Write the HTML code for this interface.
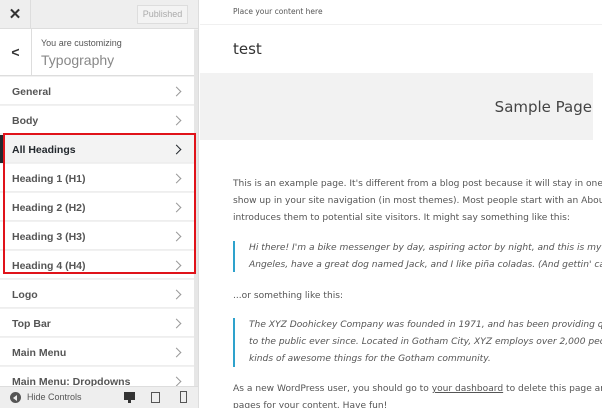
<!DOCTYPE html>
<html><head><style>
*{margin:0;padding:0;box-sizing:border-box}
body{width:602px;height:408px;overflow:hidden;font-family:"Liberation Sans",sans-serif;background:#fff;position:relative}
#sb{position:absolute;left:0;top:0;width:199px;height:408px;background:#f1f1f1;border-right:1px solid #ddd}
.top{position:absolute;left:0;top:0;width:198px;height:29px;background:#eee;border-bottom:1px solid #ddd}
.x{position:absolute;left:0;top:0;width:31px;height:29px;border-right:1px solid #ddd;text-align:center;line-height:29px;font-size:15px;color:#333;font-weight:bold}
.pub{position:absolute;left:137px;top:5px;width:51px;height:19px;border:1px solid #ddd;background:#f3f3f3;color:#aaa;font-size:9px;text-align:center;line-height:17px}
.cust{position:absolute;left:0;top:29px;width:194px;height:47px;background:#fff;border-bottom:1px solid #ddd}
.back{position:absolute;left:0;top:0;width:32px;height:47px;border-right:1px solid #ddd;text-align:center;line-height:47px;font-size:14px;font-weight:bold;color:#333}
.cust .s{position:absolute;left:41px;top:9px;font-size:9px;color:#555}
.cust .t{position:absolute;left:41px;top:23px;font-size:14px;color:#888}
.it{position:absolute;left:0;width:194px;height:28px;background:#fff;border-bottom:1px solid #eee;font-size:10.5px;color:#555;padding-left:12px;line-height:30px}
.it b{font-weight:bold}
.it:after{content:"";position:absolute;right:14px;top:11px;width:6px;height:6px;border-right:1.5px solid #999;border-top:1.5px solid #999;transform:rotate(45deg)}
.act{background:#f3f3f3;color:#23282d;font-weight:bold}
.act:after{border-color:#23282d}
.red{position:absolute;left:3px;top:133px;width:193px;height:141px;border:2px solid #e0131a}
.foot{position:absolute;left:0;top:386px;width:198px;height:22px;background:#eee;border-top:1px solid #ddd;font-size:9px;color:#555}
#pv{position:absolute;left:200px;top:0;width:402px;height:408px;background:#fff;overflow:hidden;font-family:"DejaVu Sans","Liberation Sans",sans-serif}
p{position:absolute;left:33px;font-size:9.1px;color:#555;line-height:17px;white-space:nowrap}
.q{left:49px;font-style:italic}
.bar{position:absolute;left:33px;width:2px;background:#2ea2cc}
</style></head><body>
<div id="sb">
<div class="top"><div class="x">✕</div><div class="pub">Published</div></div>
<div class="cust"><div class="back">&lt;</div><div class="s">You are customizing</div><div class="t">Typography</div></div>
<div class="it" style="top:77px"><b>General</b></div>
<div class="it" style="top:106px"><b>Body</b></div>
<div class="it act" style="top:135px">All Headings</div>
<div style="position:absolute;left:0;top:135px;width:3px;height:28px;background:#23282d"></div>
<div class="it" style="top:164px"><b>Heading 1 (H1)</b></div>
<div class="it" style="top:193px"><b>Heading 2 (H2)</b></div>
<div class="it" style="top:222px"><b>Heading 3 (H3)</b></div>
<div class="it" style="top:251px"><b>Heading 4 (H4)</b></div>
<div class="it" style="top:280px"><b>Logo</b></div>
<div class="it" style="top:309px"><b>Top Bar</b></div>
<div class="it" style="top:338px"><b>Main Menu</b></div>
<div class="it" style="top:367px"><b>Main Menu: Dropdowns</b></div>
<div style="position:absolute;left:194px;top:30px;width:4px;height:356px;background:#e6e6e6"></div>
<div class="red"></div>
<div class="foot">
<div style="position:absolute;left:10px;top:5px;width:11px;height:11px;border-radius:50%;background:#555"></div>
<div style="position:absolute;left:13px;top:8px;width:0;height:0;border-top:3px solid transparent;border-bottom:3px solid transparent;border-right:4px solid #eee"></div>
<div style="position:absolute;left:27px;top:5px">Hide Controls</div>
<div style="position:absolute;left:124px;top:5px;width:11px;height:8px;background:#333"></div>
<div style="position:absolute;left:128px;top:13px;width:3px;height:3px;background:#333"></div>
<div style="position:absolute;left:151px;top:5px;width:9px;height:11px;border:1.5px solid #555"></div>
<div style="position:absolute;left:180px;top:4px;width:7px;height:12px;border:1.5px solid #555"></div>
</div>
</div>
<div id="pv">
<div style="position:absolute;left:33px;top:7px;font-size:7.5px;color:#555">Place your content here</div>
<div style="position:absolute;left:0;top:24px;width:402px;height:1px;background:#f0f0f0"></div>
<div style="position:absolute;left:33px;top:40px;font-size:15px;color:#333">test</div>
<div style="position:absolute;left:0;top:73px;width:393px;height:67px;background:#f2f2f2"></div>
<div style="position:absolute;right:10px;top:98px;font-size:15px;color:#444">Sample Page</div>
<p style="top:176px">This is an example page. It's different from a blog post because it will stay in one place and will</p>
<p style="top:193px">show up in your site navigation (in most themes). Most people start with an About page that</p>
<p style="top:210px">introduces them to potential site visitors. It might say something like this:</p>
<div class="bar" style="top:241px;height:31px"></div>
<p class="q" style="top:240px">Hi there! I'm a bike messenger by day, aspiring actor by night, and this is my website. I live in Los</p>
<p class="q" style="top:257px">Angeles, have a great dog named Jack, and I like piña coladas. (And gettin' caught in the rain.)</p>
<p style="top:288px">...or something like this:</p>
<div class="bar" style="top:318px;height:49px"></div>
<p class="q" style="top:317px">The XYZ Doohickey Company was founded in 1971, and has been providing quality doohickeys</p>
<p class="q" style="top:334px">to the public ever since. Located in Gotham City, XYZ employs over 2,000 people and does all</p>
<p class="q" style="top:351px">kinds of awesome things for the Gotham community.</p>
<p style="top:381px">As a new WordPress user, you should go to <u>your dashboard</u> to delete this page and create new</p>
<p style="top:398px">pages for your content. Have fun!</p>
</div>
</body></html>
